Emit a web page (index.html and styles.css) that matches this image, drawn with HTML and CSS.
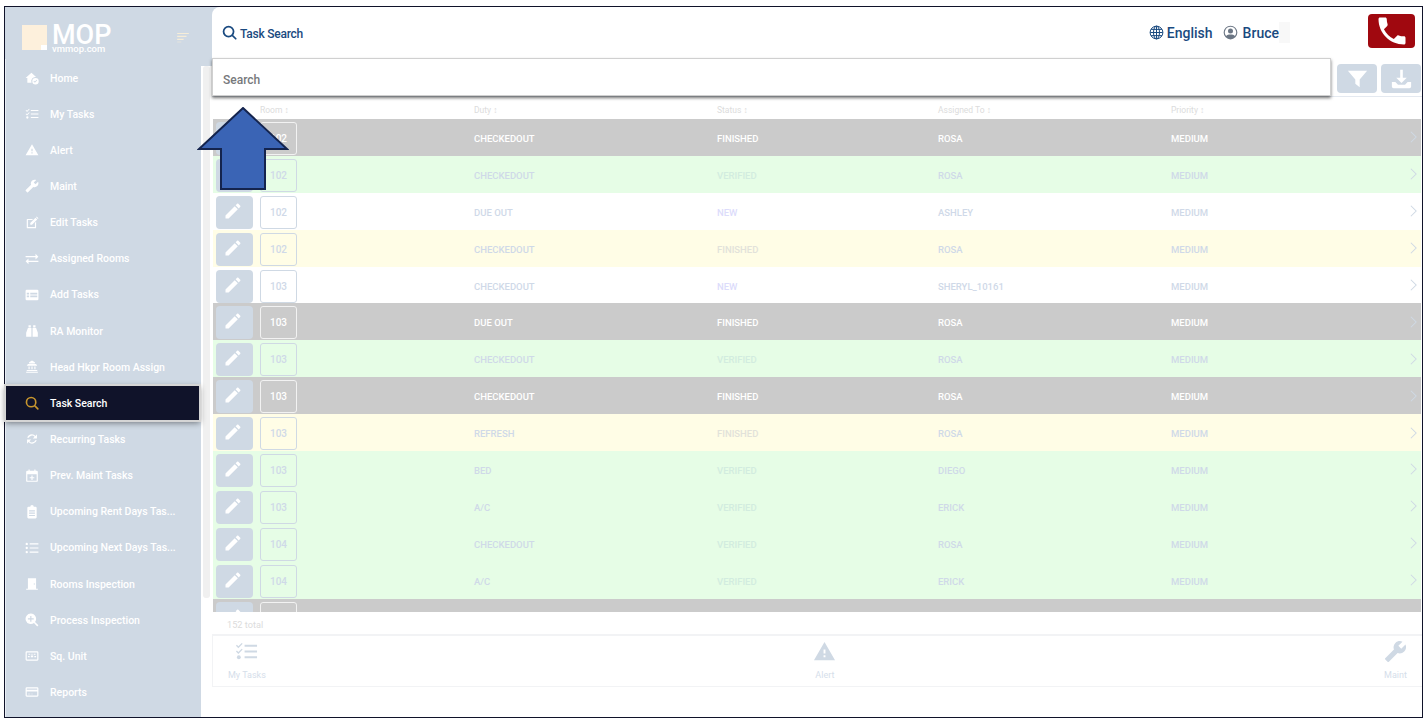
FILE: index.html
```html
<!DOCTYPE html>
<html lang="en">
<head>
<meta charset="utf-8">
<title>Task Search</title>
<link rel="stylesheet" href="styles.css">
</head>
<body>
<svg class="defs" width="0" height="0" aria-hidden="true">
  <symbol id="i-pencil" viewBox="0 0 24 24"><path d="M3 17.25V21h3.75L17.81 9.94l-3.75-3.75L3 17.25zM20.71 7.04c.39-.39.39-1.02 0-1.41l-2.34-2.34c-.39-.39-1.02-.39-1.41 0l-1.83 1.83 3.75 3.75 1.83-1.83z"/></symbol>
  <symbol id="i-home" viewBox="0 0 24 24"><path d="M11 3 1 12h3v8h7.2a7 7 0 0 1 7.8-9.6L11 3z"/><path fill-rule="evenodd" d="M18 12a5.5 5.5 0 1 0 0 11 5.5 5.5 0 0 0 0-11zm-1 8-2.5-2.5 1-1 1.500 1.500 3-3 1 1-4 4z"/></symbol>
  <symbol id="i-check" viewBox="0 0 24 24"><path d="M10 5h13v2H10zM10 11h13v2H10zM10 17h13v2H10z"/><path d="M2 5l1.500 1.500L7 3l1 1-4.500 4.500L1 6zM2 11l1.500 1.500L7 9l1 1-4.500 4.500L1 12z"/><circle cx="4" cy="18" r="2"/></symbol>
  <symbol id="i-warn" viewBox="0 0 24 24"><path d="M1 21h22L12 2 1 21zm12-3h-2v-2h2v2zm0-4h-2v-4h2v4z"/></symbol>
  <symbol id="i-wrench" viewBox="0 0 24 24"><path transform="matrix(-1 0 0 1 24 0)" d="M22.700 19l-9.100-9.100c.9-2.300.4-5-1.500-6.900-2-2-5-2.400-7.400-1.300L9 6 6 9 1.600 4.700C.4 7.100.9 10.100 2.900 12.100c1.900 1.900 4.600 2.400 6.900 1.500l9.100 9.100c.4.400 1 .4 1.400 0l2.300-2.300c.5-.4.5-1.100.1-1.400z"/></symbol>
  <symbol id="i-edit" viewBox="0 0 24 24"><path d="M4 5h10l-2 2H5v12h12v-7l2-2v10a1 1 0 0 1-1 1H4a1 1 0 0 1-1-1V6a1 1 0 0 1 1-1z"/><path d="M9 12 18 3l3 3-9 9H9zM19 2l1-1 3 3-1 1z"/></symbol>
  <symbol id="i-swap" viewBox="0 0 24 24"><path d="M1 7h17V3l5 5-5 5V9H1zM23 15H6v-4l-5 5 5 5v-4h17z"/></symbol>
  <symbol id="i-table" viewBox="0 0 24 24"><path fill-rule="evenodd" d="M3 3h18a2 2 0 0 1 2 2v14a2 2 0 0 1-2 2H3a2 2 0 0 1-2-2V5a2 2 0 0 1 2-2zm0 5v3h4V8zm6 0v3h12V8zM3 13v3h4v-3zm6 0v3h12v-3z"/></symbol>
  <symbol id="i-binoc" viewBox="0 0 24 24"><path d="M6 2h4v4H6zM14 2h4v4h-4zM5 7h6v15H2v-7zM13 7h6l3 8v7h-9z"/></symbol>
  <symbol id="i-bank" viewBox="0 0 24 24"><path d="M12 1l5 3v2H7V4zM5 7h14l2 3H3zM6 11h2v5H6zM11 11h2v5h-2zM16 11h2v5h-2zM3 17h18v2H3zM2 20h20v2H2z"/></symbol>
  <symbol id="i-search" viewBox="0 0 24 24"><path fill="none" stroke="currentColor" stroke-width="2.800" stroke-linecap="round" d="M10.500 2.500a8 8 0 1 0 0 16 8 8 0 0 0 0-16zM16.500 16.500 22 22"/></symbol>
  <symbol id="i-sync" viewBox="0 0 24 24"><path d="M12 4a8 8 0 0 1 6 2.700L20.500 4v7h-7l2.800-2.800A5.700 5.700 0 0 0 6.500 10H3.800A8.400 8.400 0 0 1 12 4zM3.500 13h7l-2.800 2.800a5.700 5.700 0 0 0 9.800-1.800h2.700a8.400 8.400 0 0 1-14.200 3.300L3.500 20z"/></symbol>
  <symbol id="i-cal" viewBox="0 0 24 24"><path fill-rule="evenodd" d="M6 1h2v2h8V1h2v2h2a2 2 0 0 1 2 2v15a2 2 0 0 1-2 2H4a2 2 0 0 1-2-2V5a2 2 0 0 1 2-2h2zM4 9v11h16V9zm7 2h2v3h3v2h-3v3h-2v-3H8v-2h3z"/></symbol>
  <symbol id="i-clip" viewBox="0 0 24 24"><path fill-rule="evenodd" d="M9 3a3 3 0 0 1 6 0h3a2 2 0 0 1 2 2v16a2 2 0 0 1-2 2H6a2 2 0 0 1-2-2V5a2 2 0 0 1 2-2zm-2 6v2h10V9zm0 4v2h10v-2zm0 4v2h10v-2z"/></symbol>
  <symbol id="i-list" viewBox="0 0 24 24"><circle cx="3" cy="5" r="2"/><circle cx="3" cy="12" r="2"/><circle cx="3" cy="19" r="2"/><path d="M8 4h15v2H8zM8 11h15v2H8zM8 18h15v2H8z"/></symbol>
  <symbol id="i-door" viewBox="0 0 24 24"><path fill-rule="evenodd" d="M5 2h14v18h3v2H2v-2h3zm10 9v2h2v-2z"/></symbol>
  <symbol id="i-zoom" viewBox="0 0 24 24"><path fill-rule="evenodd" d="M10 1a9 9 0 0 1 7.200 14.400L23 21l-2 2-5.600-5.800A9 9 0 1 1 10 1zM9 5v4H5v2h4v4h2v-4h4V9h-4V5z"/></symbol>
  <symbol id="i-unit" viewBox="0 0 24 24"><path fill-rule="evenodd" d="M3 4h18a2 2 0 0 1 2 2v12a2 2 0 0 1-2 2H3a2 2 0 0 1-2-2V6a2 2 0 0 1 2-2zm0 2v12h18V6zM6 8h3v2H6zM11 8h2v2h-2zM15 8h3v2h-3zM5 12h3v2H5zM10 11h4v3h-4zM16 12h3v2h-3z"/></symbol>
  <symbol id="i-card" viewBox="0 0 24 24"><path fill-rule="evenodd" d="M3 4h18a2 2 0 0 1 2 2v12a2 2 0 0 1-2 2H3a2 2 0 0 1-2-2V6a2 2 0 0 1 2-2zm0 2v2h18V6zm0 5v7h18v-7zm2 4h4v1H5zM11 15h2v1h-2z"/></symbol>
  <symbol id="i-bars" viewBox="0 0 24 24"><path d="M2 5h20v2H2zM2 10h16v2H2zM2 15h11v2H2zM2 20h7v1H2z"/></symbol>
  <symbol id="i-globe" viewBox="0 0 24 24"><g fill="none" stroke="currentColor" stroke-width="1.600"><circle cx="12" cy="12" r="10.200"/><ellipse cx="12" cy="12" rx="4.800" ry="10.200"/><path d="M12 2v20M2 12h20M3.300 7h17.400M3.300 17h17.400"/></g></symbol>
  <symbol id="i-user" viewBox="0 0 24 24"><path fill-rule="evenodd" d="M12 1a11 11 0 1 1 0 22 11 11 0 0 1 0-22zm0 2a9 9 0 0 0-7 14.700C6.500 15.500 9 15 12 15s5.500.5 7 2.700A9 9 0 0 0 12 3zm0 2.500a4 4 0 1 1 0 8 4 4 0 0 1 0-8z"/></symbol>
  <symbol id="i-phone" viewBox="0 0 24 24"><path d="M6.620 10.790c1.440 2.830 3.760 5.140 6.590 6.590l2.200-2.200c.27-.27.67-.36 1.020-.24 1.120.37 2.330.57 3.570.57.550 0 1 .45 1 1V20c0 .55-.45 1-1 1-9.390 0-17-7.610-17-17 0-.55.45-1 1-1h3.500c.55 0 1 .45 1 1 0 1.250.2 2.450.57 3.570.11.350.03.740-.25 1.020l-2.200 2.200z"/></symbol>
  <symbol id="i-filter" viewBox="0 0 24 24"><path d="M1 3h22l-8.500 10v9l-5-4v-5z"/></symbol>
  <symbol id="i-down" viewBox="0 0 24 24"><path d="M10.500 2h3v9H18l-6 6-6-6h4.500zM1 16h4l3 3h8l3-3h4v5a2 2 0 0 1-2 2H3a2 2 0 0 1-2-2z"/></symbol>
  <symbol id="i-chev" viewBox="0 0 10 16"><path fill="none" stroke="currentColor" stroke-width="1.200" d="M2 2l6 6-6 6"/></symbol>
</svg>

<div class="frame">
  <aside class="sidebar">
    <div class="brand">
      <div class="logo-mark"></div>
      <div class="logo-text"><span class="logo-name">MOP</span><span class="logo-site">vmmop.com</span></div>
      <svg class="brand-bars"><use href="#i-bars"/></svg>
    </div>
    <div class="side-body">
      <nav class="nav">
        <a class="nav-item"><svg class="nav-icon"><use href="#i-home"/></svg><span>Home</span></a>
        <a class="nav-item"><svg class="nav-icon"><use href="#i-check"/></svg><span>My Tasks</span></a>
        <a class="nav-item"><svg class="nav-icon"><use href="#i-warn"/></svg><span>Alert</span></a>
        <a class="nav-item"><svg class="nav-icon"><use href="#i-wrench"/></svg><span>Maint</span></a>
        <a class="nav-item"><svg class="nav-icon"><use href="#i-edit"/></svg><span>Edit Tasks</span></a>
        <a class="nav-item"><svg class="nav-icon"><use href="#i-swap"/></svg><span>Assigned Rooms</span></a>
        <a class="nav-item"><svg class="nav-icon"><use href="#i-table"/></svg><span>Add Tasks</span></a>
        <a class="nav-item"><svg class="nav-icon"><use href="#i-binoc"/></svg><span>RA Monitor</span></a>
        <a class="nav-item"><svg class="nav-icon"><use href="#i-bank"/></svg><span>Head Hkpr Room Assign</span></a>
        <a class="nav-item active"><svg class="nav-icon"><use href="#i-search"/></svg><span>Task Search</span></a>
        <a class="nav-item"><svg class="nav-icon"><use href="#i-sync"/></svg><span>Recurring Tasks</span></a>
        <a class="nav-item"><svg class="nav-icon"><use href="#i-cal"/></svg><span>Prev. Maint Tasks</span></a>
        <a class="nav-item"><svg class="nav-icon"><use href="#i-clip"/></svg><span>Upcoming Rent Days Tas...</span></a>
        <a class="nav-item"><svg class="nav-icon"><use href="#i-list"/></svg><span>Upcoming Next Days Tas...</span></a>
        <a class="nav-item"><svg class="nav-icon"><use href="#i-door"/></svg><span>Rooms Inspection</span></a>
        <a class="nav-item"><svg class="nav-icon"><use href="#i-zoom"/></svg><span>Process Inspection</span></a>
        <a class="nav-item"><svg class="nav-icon"><use href="#i-unit"/></svg><span>Sq. Unit</span></a>
        <a class="nav-item"><svg class="nav-icon"><use href="#i-card"/></svg><span>Reports</span></a>
      </nav>
      <div class="gutter"><div class="gutter-track"></div></div>
    </div>
  </aside>

  <main class="main">
    <header class="topbar">
      <svg class="top-search"><use href="#i-search"/></svg>
      <span class="top-title">Task Search</span>
      <div class="top-right">
        <svg class="top-globe"><use href="#i-globe"/></svg>
        <span class="top-label">English</span>
        <svg class="top-user"><use href="#i-user"/></svg>
        <span class="top-label">Bruce</span>
        <span class="top-stub"></span>
        <button class="call-btn"><svg class="call-icon"><use href="#i-phone"/></svg></button>
      </div>
    </header>

    <div class="toolbar">
      <button class="tool-btn"><svg class="tool-icon"><use href="#i-filter"/></svg></button>
      <button class="tool-btn"><svg class="tool-icon"><use href="#i-down"/></svg></button>
    </div>

    <div class="search-panel">Search</div>

    <div class="table">
      <div class="row head">
        <span></span><span>Room ↕</span><span>Duty ↕</span><span>Status ↕</span><span>Assigned To ↕</span><span>Priority ↕</span><span></span>
      </div>
      <div class="tbody">
        <div class="row done"><button class="edit"><svg class="edit-icon"><use href="#i-pencil"/></svg></button><span class="room">102</span><span>CHECKEDOUT</span><span>FINISHED</span><span>ROSA</span><span>MEDIUM</span><svg class="chev"><use href="#i-chev"/></svg></div>
        <div class="row ok"><button class="edit"><svg class="edit-icon"><use href="#i-pencil"/></svg></button><span class="room">102</span><span>CHECKEDOUT</span><span class="st-ver">VERIFIED</span><span>ROSA</span><span>MEDIUM</span><svg class="chev"><use href="#i-chev"/></svg></div>
        <div class="row"><button class="edit"><svg class="edit-icon"><use href="#i-pencil"/></svg></button><span class="room">102</span><span>DUE OUT</span><span class="st-new">NEW</span><span>ASHLEY</span><span>MEDIUM</span><svg class="chev"><use href="#i-chev"/></svg></div>
        <div class="row warm"><button class="edit"><svg class="edit-icon"><use href="#i-pencil"/></svg></button><span class="room">102</span><span>CHECKEDOUT</span><span class="st-fin">FINISHED</span><span>ROSA</span><span>MEDIUM</span><svg class="chev"><use href="#i-chev"/></svg></div>
        <div class="row"><button class="edit"><svg class="edit-icon"><use href="#i-pencil"/></svg></button><span class="room">103</span><span>CHECKEDOUT</span><span class="st-new">NEW</span><span>SHERYL_10161</span><span>MEDIUM</span><svg class="chev"><use href="#i-chev"/></svg></div>
        <div class="row done"><button class="edit"><svg class="edit-icon"><use href="#i-pencil"/></svg></button><span class="room">103</span><span>DUE OUT</span><span>FINISHED</span><span>ROSA</span><span>MEDIUM</span><svg class="chev"><use href="#i-chev"/></svg></div>
        <div class="row ok"><button class="edit"><svg class="edit-icon"><use href="#i-pencil"/></svg></button><span class="room">103</span><span>CHECKEDOUT</span><span class="st-ver">VERIFIED</span><span>ROSA</span><span>MEDIUM</span><svg class="chev"><use href="#i-chev"/></svg></div>
        <div class="row done"><button class="edit"><svg class="edit-icon"><use href="#i-pencil"/></svg></button><span class="room">103</span><span>CHECKEDOUT</span><span>FINISHED</span><span>ROSA</span><span>MEDIUM</span><svg class="chev"><use href="#i-chev"/></svg></div>
        <div class="row warm"><button class="edit"><svg class="edit-icon"><use href="#i-pencil"/></svg></button><span class="room">103</span><span>REFRESH</span><span class="st-fin">FINISHED</span><span>ROSA</span><span>MEDIUM</span><svg class="chev"><use href="#i-chev"/></svg></div>
        <div class="row ok"><button class="edit"><svg class="edit-icon"><use href="#i-pencil"/></svg></button><span class="room">103</span><span>BED</span><span class="st-ver">VERIFIED</span><span>DIEGO</span><span>MEDIUM</span><svg class="chev"><use href="#i-chev"/></svg></div>
        <div class="row ok"><button class="edit"><svg class="edit-icon"><use href="#i-pencil"/></svg></button><span class="room">103</span><span>A/C</span><span class="st-ver">VERIFIED</span><span>ERICK</span><span>MEDIUM</span><svg class="chev"><use href="#i-chev"/></svg></div>
        <div class="row ok"><button class="edit"><svg class="edit-icon"><use href="#i-pencil"/></svg></button><span class="room">104</span><span>CHECKEDOUT</span><span class="st-ver">VERIFIED</span><span>ROSA</span><span>MEDIUM</span><svg class="chev"><use href="#i-chev"/></svg></div>
        <div class="row ok"><button class="edit"><svg class="edit-icon"><use href="#i-pencil"/></svg></button><span class="room">104</span><span>A/C</span><span class="st-ver">VERIFIED</span><span>ERICK</span><span>MEDIUM</span><svg class="chev"><use href="#i-chev"/></svg></div>
        <div class="row done"><button class="edit"><svg class="edit-icon"><use href="#i-pencil"/></svg></button><span class="room"></span></div>
      </div>
    </div>

    <div class="total">152 total</div>

    <div class="bottom-nav">
      <a class="bottom-item"><svg class="bottom-icon"><use href="#i-check"/></svg><span>My Tasks</span></a>
      <a class="bottom-item"><svg class="bottom-icon"><use href="#i-warn"/></svg><span>Alert</span></a>
      <a class="bottom-item"><svg class="bottom-icon"><use href="#i-wrench"/></svg><span>Maint</span></a>
    </div>
  </main>

  <svg class="arrow" viewBox="0 0 92 84"><path d="M46 1 90 42H68V82H24V42H2z"/></svg>
</div>
</body>
</html>
```

FILE: styles.css
```css
* { box-sizing: border-box; }

html, body {
  margin: 0;
  height: 100%;
  background: #fff;
  overflow: hidden;
}

body {
  padding: 6px 5px 3px 4px;
  font-family: Roboto, "Liberation Sans", sans-serif;
  font-weight: 500;
}

.defs { position: absolute; }

svg { fill: currentColor; display: block; }

button {
  border: 0;
  padding: 0;
  font: inherit;
  display: flex;
  align-items: center;
  justify-content: center;
}

.frame {
  position: relative;
  display: flex;
  height: 712px;
  border: 1px solid #10132a;
  background: #cfd9e4;
}

/* Sidebar */
.sidebar {
  flex: 0 0 207px;
  display: flex;
  flex-direction: column;
  color: #fff;
  background: #cfd9e4;
}

.brand {
  position: relative;
  flex: 0 0 52px;
  display: flex;
  padding: 18px 0 0 17px;
}

.logo-mark {
  position: relative;
  width: 25px;
  height: 25px;
  background: #fdf0dc;
}

.logo-mark::after {
  content: "";
  position: absolute;
  right: 0;
  bottom: 0;
  width: 6px;
  height: 5px;
  background: #fff;
}

.logo-text {
  display: flex;
  flex-direction: column;
  margin-left: 5px;
  padding-top: 1px;
}

.logo-name {
  font-size: 27px;
  font-weight: 500;
  line-height: 19px;
  height: 19px;
}

.logo-site {
  font-size: 9.5px;
  font-weight: 500;
  line-height: 8px;
  color: #fff;
}

.brand-bars {
  width: 14px;
  height: 14px;
  margin: 5px 0 0 65px;
  color: #f6edd8;
}

.side-body {
  flex: 1;
  min-height: 0;
  display: flex;
}

.nav {
  flex: 0 0 196px;
  padding-top: 1px;
  background: #cfd9e4;
  border-left: 1px solid #e9eef4;
}

.nav-item {
  display: flex;
  align-items: center;
  height: 36.15px;
  padding-left: 19px;
  font-size: 10.5px;
  color: #fff;
  white-space: nowrap;
}

.nav-item span { margin-left: 11px; }

.nav-icon {
  width: 14px;
  height: 14px;
  flex: none;
}

.nav-item.active {
  width: 195px;
  margin-left: -1px;
  padding-left: 20px;
  color: #fff;
  background: #10132a;
  outline: 2px solid #d5d5d5;
  outline-offset: -1px;
  box-shadow: 0 2px 6px rgba(0, 0, 0, .45);
  position: relative;
}

.nav-item.active .nav-icon { color: #c8962e; }

.gutter {
  flex: 1;
  padding: 0 2px 119px 2px;
  background: #fff;
  border-top: 7px solid #cfd9e4;
}

.gutter-track {
  height: 100%;
  background: #f0f0f0;
  border-radius: 3px;
}

/* Main */
.main {
  position: relative;
  flex: 1;
  min-width: 0;
  display: flex;
  flex-direction: column;
  background: #fff;
  border-top-left-radius: 8px;
}

.topbar {
  flex: 0 0 51px;
  display: flex;
  align-items: center;
  padding: 2px 0 0 10px;
  color: #1a4a80;
}

.top-search { width: 15px; height: 15px; margin-top: -2px; }

.top-title {
  margin-left: 3px;
  font-size: 12px;
  letter-spacing: -.02em;
}

.top-right {
  margin-left: auto;
  display: flex;
  align-items: center;
  height: 100%;
}

.top-globe { width: 15px; height: 15px; margin-top: -2px; }

.top-label {
  font-size: 14px;
  margin-left: 3px;
  margin-top: -2px;
}

.top-user {
  width: 15px;
  height: 15px;
  margin-top: -2px;
  margin-left: 10px;
  margin-right: 2px;
  color: #6b7684;
}

.top-stub {
  width: 11px;
  height: 21px;
  margin-top: -2px;
  background: #f8f8f8;
}

.call-btn {
  width: 47px;
  height: 34px;
  margin: -5px 7px 0 78px;
  background: #a0080f;
  border-radius: 4px;
  color: #fff;
}

.call-icon { width: 36px; height: 36px; }

.toolbar {
  flex: 0 0 39px;
  display: flex;
  justify-content: flex-end;
  gap: 4px;
  padding: 6px 1px 3px 0;
  border-bottom: 1px solid #e4e9f0;
}

.tool-btn {
  width: 40px;
  height: 29px;
  background: #cfd9e4;
  border-radius: 4px;
  color: #fff;
}

.tool-icon { width: 21px; height: 21px; }

.search-panel {
  position: absolute;
  left: 0;
  top: 51px;
  width: 1119px;
  height: 38px;
  display: flex;
  align-items: center;
  padding: 6px 0 0 10px;
  font-size: 12px;
  color: #77797c;
  background: #fff;
  border: 1px solid #d0d0d0;
  box-shadow: 0 2px 3px rgba(0, 0, 0, .55);
}

/* Table */
.table {
  flex: none;
  margin: 0 1px;
}

.row {
  display: grid;
  grid-template-columns: 44px 214px 243px 221px 233px 242px 8px;
  align-items: center;
  height: 36.9px;
  padding: 2px 0 0 3px;
  font-size: 9.5px;
  color: #cfd9e8;
  background: #fff;
}

.row.head {
  height: 22px;
  padding-top: 4px;
  font-size: 8.5px;
  font-weight: 400;
  color: #dcdcdc;
}

.tbody {
  height: 493px;
  overflow: hidden;
}

.row.done { background: #cbcbcb; color: #fff; }
.row.ok { background: #e6fde6; }
.row.warm { background: #fffde6; }

.st-ver { color: #d2ecdf; }
.st-new { color: #dcdcfb; }
.st-fin { color: #e2e2da; }

.edit {
  width: 37px;
  height: 33px;
  background: #cfd9e4;
  border-radius: 4px;
  color: #fff;
}

.edit-icon { width: 20px; height: 20px; margin: -3px 3px 0 0; }

.room {
  width: 37px;
  height: 33px;
  display: flex;
  align-items: center;
  justify-content: center;
  border: 1px solid #cfd9e4;
  border-radius: 3px;
  font-size: 10px;
}

.row.done .room { border-color: #f2f2f2; }

.chev {
  width: 9px;
  height: 14px;
  margin: -2px 0 0 -4px;
  color: #cfd9e4;
}

.total {
  flex: 0 0 24px;
  display: flex;
  align-items: center;
  padding: 2px 0 0 15px;
  font-size: 9.2px;
  font-weight: 400;
  color: #dcdcdc;
  border-bottom: 2px solid #f2f3f5;
}

.bottom-nav {
  flex: 0 0 51px;
  display: flex;
  justify-content: space-between;
  padding: 4px 15px 0 15px;
  border-left: 1px solid #f2f3f5;
  border-bottom: 1px solid #f2f3f5;
}

.bottom-item {
  display: flex;
  flex-direction: column;
  align-items: center;
  font-size: 9px;
  font-weight: 400;
  color: #d5deea;
}

.bottom-icon {
  width: 23px;
  height: 23px;
  margin-bottom: 7px;
  color: #cfd9e4;
}

/* Annotation arrow over the page */
.arrow {
  position: absolute;
  left: 192px;
  top: 100px;
  width: 92px;
  height: 84px;
  fill: #3a64b5;
  stroke: #14244e;
  stroke-width: 2;
}
```
